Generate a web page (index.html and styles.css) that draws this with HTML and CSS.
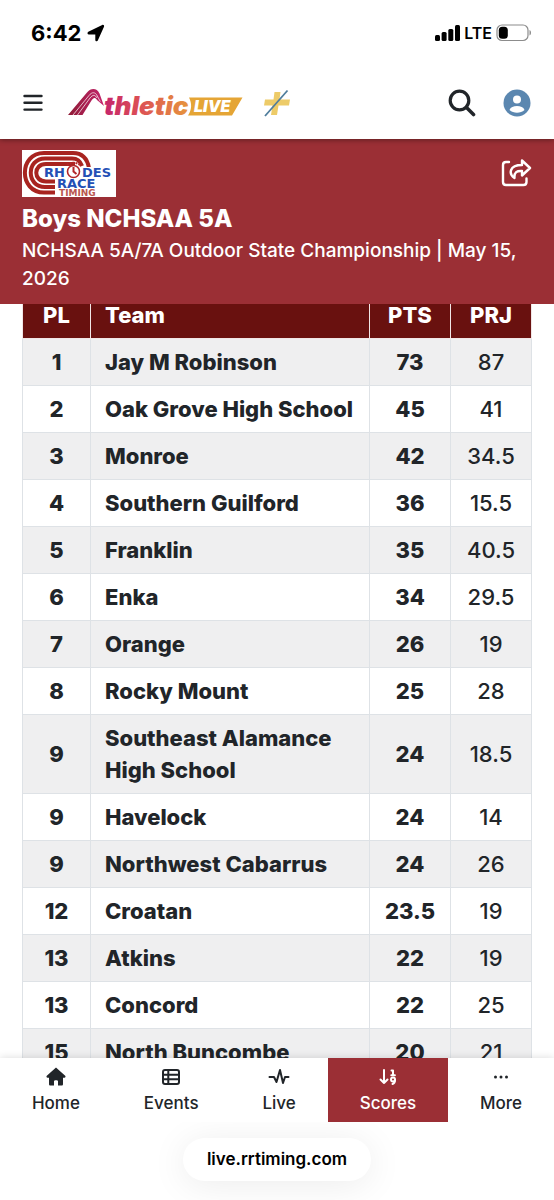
FILE: index.html
```html
<!DOCTYPE html>
<html lang="en">
<head>
  <meta charset="UTF-8">
  <meta name="viewport" content="width=device-width, initial-scale=1.0">
  <title>Boys NCHSAA 5A - Scores</title>
  <link rel="stylesheet" href="styles.css">
</head>
<body>
  <div class="status-bar">
    <div class="status-left">
      <span class="time">6:42</span>
      <svg width="18" height="18" viewBox="0 0 18 18"><path d="M1.300 7.800 15.200.900c1.300-.5 2.300.5 1.800 1.800L10.800 16.600c-.6 1.200-2.500.9-2.500-.6V10.600H2C.3 10.500 0 8.600 1.300 7.800Z" fill="#000"/></svg>
    </div>
    <div class="status-right">
      <svg width="25" height="16" viewBox="0 0 25 16"><rect x="0" y="10" width="5" height="6" rx="1.500"/><rect x="6.600" y="7" width="5" height="9" rx="1.500"/><rect x="13.300" y="4" width="5" height="12" rx="1.500"/><rect x="20" y="0" width="5" height="16" rx="1.500"/></svg>
      <span class="network">LTE</span>
      <svg width="36" height="18" viewBox="0 0 36 18"><rect x="1" y="1" width="31" height="15.500" rx="5" fill="none" stroke="#8c8c8c" stroke-width="1.200"/><rect x="2.800" y="2.800" width="9" height="12" rx="3.500"/><path d="M33.500 6v5.500c2-.8 2-4.700 0-5.500Z" fill="#8c8c8c"/></svg>
    </div>
  </div>

  <header class="toolbar">
    <button class="icon-btn" aria-label="Menu">
      <svg width="20" height="18" viewBox="0 0 20 18"><path d="M1.500 2h17M1.500 8.800h17M1.500 15.600h17" stroke="#212529" stroke-width="2.400" stroke-linecap="round"/></svg>
    </button>
    <a href="#" class="brand" aria-label="Athletic Live">
      <svg width="176" height="30" viewBox="0 0 176 30">
        <defs>
          <linearGradient id="brandText" x1="36" y1="0" x2="124" y2="0" gradientUnits="userSpaceOnUse">
            <stop offset="0" stop-color="#c4246c"/>
            <stop offset=".4" stop-color="#dc4f55"/>
            <stop offset="1" stop-color="#e79a3b"/>
          </linearGradient>
          <linearGradient id="brandMark" x1="0" y1="0" x2="36" y2="0" gradientUnits="userSpaceOnUse">
            <stop offset="0" stop-color="#8e1b35"/>
            <stop offset="1" stop-color="#c4246c"/>
          </linearGradient>
        </defs>
        <path d="M0 27 19 4.500C23-.5 29 0 31.500 5.500L36 18l-7-6c-2-3-3.500-2.500-5.500.5L14.500 27Z" fill="url(#brandMark)"/>
        <path d="M5 27 21 7.500c3-4 6.500-3.500 8.300.5l3 5.500M9.500 27 22 10c2.800-3.500 5-3.500 7 0" fill="none" stroke="#fff" stroke-width=".7"/>
        <path d="M121 9.500h53.500l-10.500 18h-44c4-6 4-12 1-18Z" fill="#e5a535"/>
        <text x="36" y="27" class="brand-text" fill="url(#brandText)">thletic</text>
        <text x="126" y="24" class="brand-live" fill="#fff">LIVE</text>
      </svg>
    </a>
    <a href="#" class="plus" aria-label="Plus">
      <svg width="28" height="28" viewBox="0 0 28 28"><path d="M11.500 3h6l-1 7.500H27l-1 6H15.500L14 26H8l1.500-9.500H1l1-6h8.500Z" fill="#edcb68"/><path d="M2 27 24.500 1.500" stroke="#4f7d9c" stroke-width="1.800"/></svg>
    </a>
    <div class="toolbar-actions">
      <button class="icon-btn" aria-label="Search">
        <svg width="28" height="28" viewBox="0 0 28 28" fill="none" stroke="#212529" stroke-linecap="round"><circle cx="11.500" cy="11.500" r="9.300" stroke-width="3.200"/><path d="m18.500 18.500 7 7" stroke-width="3.600"/></svg>
      </button>
      <button class="icon-btn" aria-label="Account">
        <svg width="28" height="28" viewBox="0 0 28 28"><circle cx="14" cy="14" r="13.500" fill="#5b87b0"/><circle cx="14" cy="10.500" r="4" fill="#fff"/><path d="M6.500 21c1-3 4-4 7.500-4s6.500 1 7.500 4c-4 3.500-11 3.500-15 0Z" fill="#fff"/></svg>
      </button>
    </div>
  </header>

  <section class="banner">
    <div class="banner-top">
      <svg class="sponsor" width="94" height="47" viewBox="0 0 94 47">
        <rect width="94" height="47" fill="#fff"/>
        <g fill="none" stroke="#a82420" stroke-width="4">
          <path d="M67 18C65 7 59 3 51 3H22C-3.500 3-3.500 42.500 22 42.500H33"/>
          <path d="M60 16C58 10 55 8.500 50 8.500H23C4 8.500 4 37 23 37H33"/>
          <path d="M53 14H24C11 14 11 31.500 24 31.500H33"/>
        </g>
        <path d="M22 17h71v12H80v10H34V29H22Z" fill="#fff"/>
        <text x="22" y="27" class="sponsor-name">RH</text>
        <text x="60" y="27" class="sponsor-name">DES</text>
        <text x="35" y="38" class="sponsor-name">RACE</text>
        <text x="37" y="46" class="sponsor-sub">TIMING</text>
        <circle cx="51.500" cy="21.500" r="6" fill="#fff" stroke="#b3262a" stroke-width="1.600"/>
        <path d="M51.500 17v4.500l3 2.500" fill="none" stroke="#b3262a" stroke-width="2"/>
        <path d="M45 15c3-3 10-3 13 0" fill="none" stroke="#b3262a" stroke-width="2" stroke-dasharray="2 1"/>
      </svg>
      <button class="icon-btn share" aria-label="Share">
        <svg width="32" height="30" viewBox="0 0 32 30" fill="none" stroke="#fff" stroke-width="2.400" stroke-linecap="round" stroke-linejoin="round"><path d="M9 3H6C4 3 3 4 3 6v17c0 2 1 3 3 3h17.500c2 0 3-1 3-3v-3.500"/><path d="M22 1.500 30 9l-8 7.500V12c-5-.3-8 1-7.500 7C8.500 15 9 6 22 6Z"/></svg>
      </button>
    </div>
    <h1>Boys NCHSAA 5A</h1>
    <p>NCHSAA 5A/7A Outdoor State Championship | May 15, 2026</p>
  </section>

  <main class="scores">
    <table>
      <thead>
        <tr><th class="place">PL</th><th class="team">Team</th><th class="points">PTS</th><th class="points">PRJ</th></tr>
      </thead>
      <tbody>
        <tr><td>1</td><td>Jay M Robinson</td><td>73</td><td>87</td></tr>
        <tr><td>2</td><td>Oak Grove High School</td><td>45</td><td>41</td></tr>
        <tr><td>3</td><td>Monroe</td><td>42</td><td>34.5</td></tr>
        <tr><td>4</td><td>Southern Guilford</td><td>36</td><td>15.5</td></tr>
        <tr><td>5</td><td>Franklin</td><td>35</td><td>40.5</td></tr>
        <tr><td>6</td><td>Enka</td><td>34</td><td>29.5</td></tr>
        <tr><td>7</td><td>Orange</td><td>26</td><td>19</td></tr>
        <tr><td>8</td><td>Rocky Mount</td><td>25</td><td>28</td></tr>
        <tr><td>9</td><td>Southeast Alamance High School</td><td>24</td><td>18.5</td></tr>
        <tr><td>9</td><td>Havelock</td><td>24</td><td>14</td></tr>
        <tr><td>9</td><td>Northwest Cabarrus</td><td>24</td><td>26</td></tr>
        <tr><td>12</td><td>Croatan</td><td>23.5</td><td>19</td></tr>
        <tr><td>13</td><td>Atkins</td><td>22</td><td>19</td></tr>
        <tr><td>13</td><td>Concord</td><td>22</td><td>25</td></tr>
        <tr><td>15</td><td>North Buncombe</td><td>20</td><td>21</td></tr>
      </tbody>
    </table>
  </main>

  <nav class="tabs">
    <a href="#">
      <svg width="20" height="20" viewBox="0 0 20 20"><path d="M9.200 1.200.8 8.800c-.8.900-.2 1.900.8 1.900H3V17c0 1 .5 1.500 1.500 1.500H8V14c0-1 4-1 4 0v4.500h3.500c1 0 1.500-.5 1.500-1.500v-6.300h1.400c1 0 1.600-1 .8-1.900L10.800 1.200c-.5-.5-1.100-.5-1.600 0Z" fill="#212529"/></svg>
      <span>Home</span>
    </a>
    <a href="#">
      <svg width="20" height="20" viewBox="0 0 20 20" fill="none" stroke="#212529" stroke-width="2"><rect x="2" y="3" width="16" height="14" rx="2"/><path d="M2 7.700h16M2 12.300h16M7.300 3v14"/></svg>
      <span>Events</span>
    </a>
    <a href="#">
      <svg width="22" height="20" viewBox="0 0 22 20" fill="none" stroke="#212529" stroke-width="2" stroke-linecap="round" stroke-linejoin="round"><path d="M1.500 10H6l2.500 5 3.500-12 3 13 2-6h3.500"/></svg>
      <span>Live</span>
    </a>
    <a href="#" class="active">
      <svg width="20" height="20" viewBox="0 0 20 20" fill="none" stroke="#fff" stroke-width="2" stroke-linecap="round" stroke-linejoin="round"><path d="M6 3v13M2.500 12.500 6 16l3.500-3.500M13.500 3.500H15V8M13.300 8.200h3.600"/><circle cx="15" cy="12.500" r="2"/><path d="M17 13c0 2-1 3.500-2.500 4"/></svg>
      <span>Scores</span>
    </a>
    <a href="#">
      <svg width="20" height="20" viewBox="0 0 20 20" fill="#212529"><circle cx="4.500" cy="10" r="1.500"/><circle cx="10" cy="10" r="1.500"/><circle cx="15.500" cy="10" r="1.500"/></svg>
      <span>More</span>
    </a>
  </nav>

  <footer class="browser-bar">
    <button class="address">live.rrtiming.com</button>
  </footer>
</body>
</html>
```
FILE: styles.css
```css
* {
  margin: 0;
  padding: 0;
  box-sizing: border-box;
}

body {
  display: flex;
  flex-direction: column;
  height: 100vh;
  background: white;
  color: #212529;
  font-family: Inter, sans-serif;
}

svg {
  display: block;
}

button {
  border: none;
  background: none;
  font-family: inherit;
  cursor: pointer;
}

a {
  color: inherit;
  text-decoration: none;
}

/* Status bar */
.status-bar {
  display: flex;
  justify-content: space-between;
  align-items: center;
  height: 66px;
  padding: 0 22px 0 31px;
  color: black;
}

.status-left,
.status-right {
  display: flex;
  align-items: center;
  gap: 4px;
}

.status-left {
  gap: 6px;
}

.time {
  font-size: 22px;
  font-weight: 700;
}

.network {
  font-size: 16px;
  font-weight: 600;
}

/* Toolbar */
.toolbar {
  position: relative;
  display: flex;
  align-items: center;
  height: 73px;
  padding: 0 23px;
  background: white;
  box-shadow: 0 1px 5px rgba(0, 0, 0, 0.4);
  clip-path: inset(0 0 -10px 0);
}

.brand {
  margin-left: 25px;
}

.brand svg {
  overflow: visible;
}

.brand-text {
  font-size: 26px;
  font-weight: 900;
  font-style: italic;
}

.brand-live {
  font-size: 16px;
  font-weight: 900;
  font-style: italic;
}

.plus {
  margin-left: 19px;
}

.toolbar-actions {
  display: flex;
  gap: 27px;
  margin-left: auto;
}

/* Meet banner */
.banner {
  padding: 11px 22px;
  background: #9b2f35;
  color: white;
}

.banner-top {
  display: flex;
  justify-content: space-between;
  align-items: center;
  margin-bottom: 6px;
}

.sponsor-name {
  font-family: "DejaVu Sans", sans-serif;
  font-size: 13px;
  font-weight: 700;
  fill: #2450b5;
}

.sponsor-sub {
  font-family: "DejaVu Sans", sans-serif;
  font-size: 9px;
  font-weight: 700;
  fill: #b9574f;
}

h1 {
  margin-bottom: 2px;
  font-size: 24px;
  font-weight: 800;
  line-height: 32px;
}

.banner p {
  font-size: 19px;
  font-weight: 500;
  line-height: 28px;
}

/* Scores table */
.scores {
  flex: 1;
  min-height: 0;
  overflow: hidden;
  padding: 0 22px;
}

table {
  width: 100%;
  margin-top: -13px;
  border-collapse: collapse;
  table-layout: fixed;
  font-size: 22px;
  line-height: 32px;
}

th,
td {
  padding: 7px 14px;
  border: 1px solid #dee2e6;
  text-align: center;
}

th {
  border-color: #f1e6e6;
  background: #69110f;
  color: white;
  font-weight: 800;
}

td {
  font-weight: 800;
}

th:nth-child(2),
td:nth-child(2) {
  padding-right: 4px;
  text-align: left;
}

td:last-child {
  font-weight: 500;
}

th:nth-child(n+3),
td:nth-child(n+3) {
  padding: 7px 4px;
}

tbody tr:nth-child(odd) {
  background: #efeff0;
}

.place {
  width: 68px;
}

.points {
  width: 81px;
}

/* Bottom tabs */
.tabs {
  display: flex;
  height: 64px;
  box-shadow: 0 0 8px rgba(0, 0, 0, 0.15);
  clip-path: inset(-10px 0 0 0);
}

.tabs a {
  display: flex;
  flex: 1 1 auto;
  flex-direction: column;
  align-items: center;
  gap: 4px;
  padding-top: 9px;
  background: white;
  font-size: 17px;
  font-weight: 500;
  line-height: 24px;
}

.tabs .active {
  background: #9b2f35;
  color: white;
}

/* Browser address */
.browser-bar {
  display: flex;
  justify-content: center;
  align-items: flex-start;
  height: 78px;
  padding-top: 16px;
  overflow: hidden;
}

.address {
  padding: 0 24px;
  border-radius: 22px;
  background: white;
  box-shadow: 0 4px 36px rgba(0, 0, 0, 0.08);
  color: black;
  font-size: 17px;
  font-weight: 600;
  line-height: 43px;
}
```
